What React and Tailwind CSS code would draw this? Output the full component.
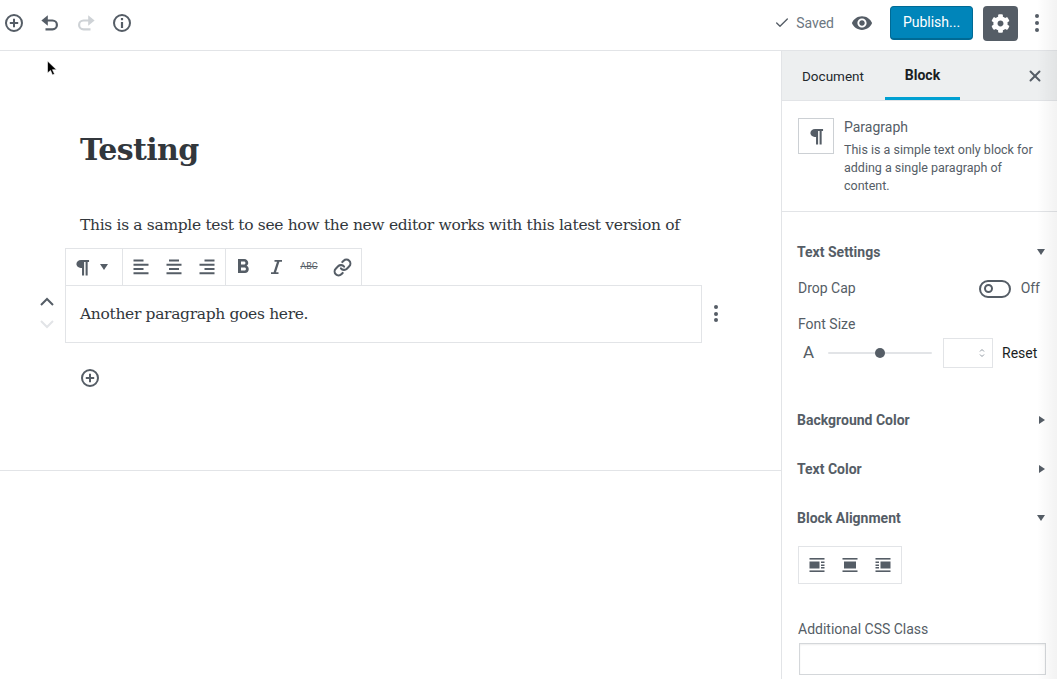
import React from 'react'
import { FaCog } from 'react-icons/fa'
import { MdFormatBold, MdVisibility } from 'react-icons/md'
import { Check, Link, X } from 'lucide-react'

const sans = "font-['Roboto','Liberation_Sans',sans-serif]"
const serif = "font-['DejaVu_Serif','Liberation_Serif',serif]"

function PlusCircle({ size = 20 }) {
  return (
    <svg width={size} height={size} viewBox="0 0 20 20" fill="none" stroke="currentColor" strokeWidth="2">
      <circle cx="10" cy="10" r="8" />
      <path d="M10 5.8v8.4M5.8 10h8.4" />
    </svg>
  )
}

function UndoIcon({ flip }) {
  return (
    <svg width="20" height="20" viewBox="0 0 20 20" fill="none" className={flip ? '-scale-x-100' : ''}>
      <path d="M6 7.5h6.5a4.4 4.4 0 0 1 0 8.8H5.5" stroke="currentColor" strokeWidth="2.2" />
      <path d="M7.8 2.2v10.6L1.4 7.5z" fill="currentColor" />
    </svg>
  )
}

function InfoIcon() {
  return (
    <svg width="20" height="20" viewBox="0 0 20 20" fill="none" stroke="currentColor" strokeWidth="2">
      <circle cx="10" cy="10" r="8" />
      <path d="M10 9v6" strokeWidth="2.2" />
      <path d="M10 5v2.2" strokeWidth="2.2" />
    </svg>
  )
}

function Pilcrow({ className = '' }) {
  return (
    <svg className={className} width="15" height="17" viewBox="0 0 16 18" fill="currentColor">
      <path d="M6.5 1H15v2h-1.5v14.5h-2.2V3H9.7v14.5H7.5V9.6C4 9.6 1.5 7.8 1.5 5.3S3.5 1 6.5 1z" />
    </svg>
  )
}

function ItalicIcon() {
  return (
    <svg width="20" height="20" viewBox="0 0 20 20" fill="currentColor">
      <path d="M8.5 3H16v1.8h-2.6L10 15.2h2.5V17H5v-1.8h2.6L11 4.8H8.5z" />
    </svg>
  )
}

function Dots({ className = 'gap-[3px]' }) {
  return (
    <div className={`flex flex-col ${className}`}>
      <span className="w-1 h-1 rounded-full bg-[#555d66]" />
      <span className="w-1 h-1 rounded-full bg-[#555d66]" />
      <span className="w-1 h-1 rounded-full bg-[#555d66]" />
    </div>
  )
}

function AlignIcon({ kind }) {
  const lines = {
    left: 'M2.5 3.5h10M2.5 7.8h15M2.5 12h10M2.5 16.3h15',
    center: 'M5 3.5h10M2.5 7.8h15M5 12h10M2.5 16.3h15',
    right: 'M7.5 3.5h10M2.5 7.8h15M7.5 12h10M2.5 16.3h15',
  }[kind]
  return (
    <svg width="20" height="20" viewBox="0 0 20 20" fill="none" stroke="#555d66" strokeWidth="2">
      <path d={lines} />
    </svg>
  )
}

function BlockAlignIcon({ kind }) {
  return (
    <svg width="16" height="14" viewBox="0 0 16 14" fill="#555d66">
      <rect x="0.5" y="0" width="15" height="1.6" />
      <rect x="0.5" y="12.4" width="15" height="1.6" />
      {kind === 'left' && <rect x="0.5" y="3.5" width="10" height="7" />}
      {kind === 'left' && <path d="M12 3.5h3.5v1.5H12zM12 6.5h3.5V8H12zM12 9h3.5v1.5H12z" />}
      {kind === 'center' && <rect x="2" y="3.5" width="12" height="7" />}
      {kind === 'right' && <rect x="5.5" y="3.5" width="10" height="7" />}
      {kind === 'right' && <path d="M.5 3.5H4v1.5H.5zM.5 6.5H4V8H.5zM.5 9H4v1.5H.5z" />}
    </svg>
  )
}

function Caret({ dir = 'down' }) {
  if (dir === 'right') {
    return <span className="w-0 h-0 border-y-[4px] border-y-transparent border-l-[6px] border-l-[#555d66]" />
  }
  return <span className="w-0 h-0 border-x-[4px] border-x-transparent border-t-[6px] border-t-[#555d66]" />
}

function PanelHeader({ title, open, className = '' }) {
  return (
    <div className={`flex items-center justify-between pl-[15px] pr-[12px] ${className}`}>
      <span className="text-[14px] font-bold text-[#555d66]">{title}</span>
      <Caret dir={open ? 'down' : 'right'} />
    </div>
  )
}

function TopBar() {
  return (
    <header className="h-[51px] shrink-0 flex items-center justify-between border-b border-[#e2e4e7] bg-white pb-[4px]">
      <div className="flex items-center text-[#555d66]">
        <div className="ml-[4px] w-[20px]"><PlusCircle /></div>
        <div className="ml-[16px] w-[20px]"><UndoIcon /></div>
        <div className="ml-[16px] w-[20px] text-[#ced2d6]"><UndoIcon flip /></div>
        <div className="ml-[16px] w-[20px]"><InfoIcon /></div>
      </div>
      <div className="flex items-center text-[#555d66]">
        <Check size={16} strokeWidth={2} />
        <span className="ml-[6px] text-[14px] text-[#6c7781]">Saved</span>
        <MdVisibility size={22} className="ml-[17px]" />
        <button className="ml-[17px] w-[83px] h-[34px] rounded-[4px] bg-[#0085ba] border border-[#006a95] border-b-2 text-white text-[14px]">Publish...</button>
        <div className="ml-[10px] w-[35px] h-[35px] rounded-[4px] bg-[#555d66] flex items-center justify-center text-white">
          <FaCog size={19} />
        </div>
        <div className="ml-[17px] mr-[18px]"><Dots /></div>
      </div>
    </header>
  )
}

function Editor() {
  return (
    <main className="flex-1 min-w-0">
      <div className={`h-[420px] border-b border-[#e2e4e7] ${serif} text-[#32373c]`}>
        <h1 className="pl-[80px] pt-[77px] text-[30px] leading-[44px] font-bold tracking-[-0.6px]">Testing</h1>
        <p className="pl-[80px] mt-[39px] h-[74px] text-[15.5px] leading-[29px] tracking-[-0.33px] whitespace-nowrap overflow-hidden">
          This is a sample test to see how the new editor works with this latest version of<br />WordPress.
        </p>
        <div className="relative ml-[65px] w-[637px] h-[58px] border border-[#e2e4e7] flex items-center pl-[14px] pt-[2px]">
          <span className="text-[15.5px] tracking-[-0.33px]">Another paragraph goes here.</span>
          {/* block toolbar sits over the line above */}
          <div className={`absolute left-[-1px] top-[-38px] h-[38px] flex bg-white border border-[#e2e4e7] text-[#555d66] ${sans}`}>
            <div className="w-[57px] flex items-center pl-[9px] gap-[10px] border-r border-[#e2e4e7]">
              <Pilcrow />
              <Caret />
            </div>
            <div className="w-[103px] flex items-center justify-center gap-[13px] border-r border-[#e2e4e7]">
              <AlignIcon kind="left" />
              <AlignIcon kind="center" />
              <AlignIcon kind="right" />
            </div>
            <div className="w-[135px] flex items-center pl-[5px]">
              <MdFormatBold size={24} />
              <div className="ml-[11px]"><ItalicIcon /></div>
              <span className="ml-[12px] w-[22px] text-center text-[9px] line-through">ABC</span>
              <Link size={19} strokeWidth={2.6} className="ml-[13px]" />
            </div>
          </div>
          <div className="absolute left-[-26px] top-[11px] flex flex-col gap-[14px]">
            <svg width="14" height="9" viewBox="0 0 14 9" fill="none" stroke="#555d66" strokeWidth="2"><path d="M1 8l6-6 6 6" /></svg>
            <svg width="14" height="9" viewBox="0 0 14 9" fill="none" stroke="#e2e4e7" strokeWidth="2"><path d="M1 1l6 6 6-6" /></svg>
          </div>
          <div className="absolute right-[-17px] top-[19px]"><Dots className="gap-[2.5px]" /></div>
        </div>
        <div className="ml-[80px] mt-[25px] text-[#555d66]"><PlusCircle /></div>
      </div>
    </main>
  )
}

function Sidebar() {
  return (
    <aside className={`w-[276px] shrink-0 border-l border-[#e2e4e7] bg-white ${sans} text-[#555d66]`}>
      <div className="h-[50px] flex bg-[#edeff0] border-b border-[#e2e4e7] relative">
        <div className="ml-[20px] w-[63px] flex items-center pt-[1px] text-[13.5px] text-[#23282d] whitespace-nowrap">Document</div>
        <div className="ml-[20px] w-[75px] flex items-center justify-center pt-[3px] text-[14px] font-bold text-[#191e23] border-b-[3px] border-[#00a0d2]">Block</div>
        <X size={18} strokeWidth={2.6} className="absolute right-[13px] top-[16px]" />
      </div>
      <div className="h-[111px] flex border-b border-[#e2e4e7] pl-[16px] pt-[17px]">
        <div className="w-[36px] h-[36px] border border-[#ccd0d4] flex items-center justify-center shrink-0">
          <Pilcrow />
        </div>
        <div className="ml-[10px]">
          <div className="text-[14px] leading-[18px]">Paragraph</div>
          <div className="mt-[5px] text-[12.5px] leading-[18px] w-[200px]">This is a simple text only block for adding a single paragraph of content.</div>
        </div>
      </div>
      <PanelHeader title="Text Settings" open className="mt-[31px] h-[18px]" />
      <div className="flex items-center justify-between pl-[16px] pr-[17px] mt-[17px] text-[14px]">
        <span>Drop Cap</span>
        <div className="flex items-center gap-[10px]">
          <div className="w-[32px] h-[18px] rounded-full border-2 border-[#555d66] flex items-center pl-[3px]">
            <span className="w-[9px] h-[9px] rounded-full border-2 border-[#555d66]" />
          </div>
          <span>Off</span>
        </div>
      </div>
      <div className="pl-[16px] mt-[16px] text-[14px] leading-[18px]">Font Size</div>
      <div className="flex items-center pl-[21px] mt-[5px] h-[30px]">
        <span className="text-[17px] w-[25px]">A</span>
        <div className="relative w-[104px] h-[2px] rounded bg-[#e2e4e7]">
          <span className="absolute left-[47px] top-[-4px] w-[10px] h-[10px] rounded-full bg-[#555d66]" />
        </div>
        <div className="ml-[11px] w-[50px] h-[30px] border border-[#e2e4e7] flex items-center justify-end pr-[6px]">
          <svg width="8" height="12" viewBox="0 0 8 12" fill="none" stroke="#8f98a1"><path d="M2 4.5l2-2 2 2M2 7.5l2 2 2-2" /></svg>
        </div>
        <span className="ml-[9px] text-[14px] text-[#191e23]">Reset</span>
      </div>
      <PanelHeader title="Background Color" className="mt-[43px] h-[18px]" />
      <PanelHeader title="Text Color" className="mt-[31px] h-[18px]" />
      <PanelHeader title="Block Alignment" open className="mt-[31px] h-[18px]" />
      <div className="ml-[16px] mt-[19px] w-[104px] h-[38px] border border-[#e2e4e7] flex items-center justify-center gap-[17px]">
        <BlockAlignIcon kind="left" />
        <BlockAlignIcon kind="center" />
        <BlockAlignIcon kind="right" />
      </div>
      <div className="pl-[16px] mt-[36px] text-[14px] leading-[18px]">Additional CSS Class</div>
      <div className="ml-[17px] mt-[5px] w-[247px] h-[32px] border border-[#d4d7da] shadow-[inset_0_1px_2px_rgba(0,0,0,0.07)]" />
    </aside>
  )
}

export default function App() {
  return (
    <div className={`relative h-[679px] w-full overflow-hidden flex flex-col bg-white ${sans}`}>
      <TopBar />
      <div className="flex flex-1 min-h-0">
        <Editor />
        <Sidebar />
      </div>
      {/* mouse pointer caught in the screenshot */}
      <svg className="absolute left-[46px] top-[60px]" width="12" height="18" viewBox="0 0 12 18">
        <path d="M1.5 1v12l3-2.6 2 4.6 2-.9-2-4.4h4z" fill="#000" stroke="#fff" strokeWidth="0.6" />
      </svg>
      {/* soft fade along the right edge */}
      <div className="absolute right-0 top-0 bottom-0 w-[20px] bg-gradient-to-r from-transparent to-black/5 pointer-events-none" />
    </div>
  )
}
